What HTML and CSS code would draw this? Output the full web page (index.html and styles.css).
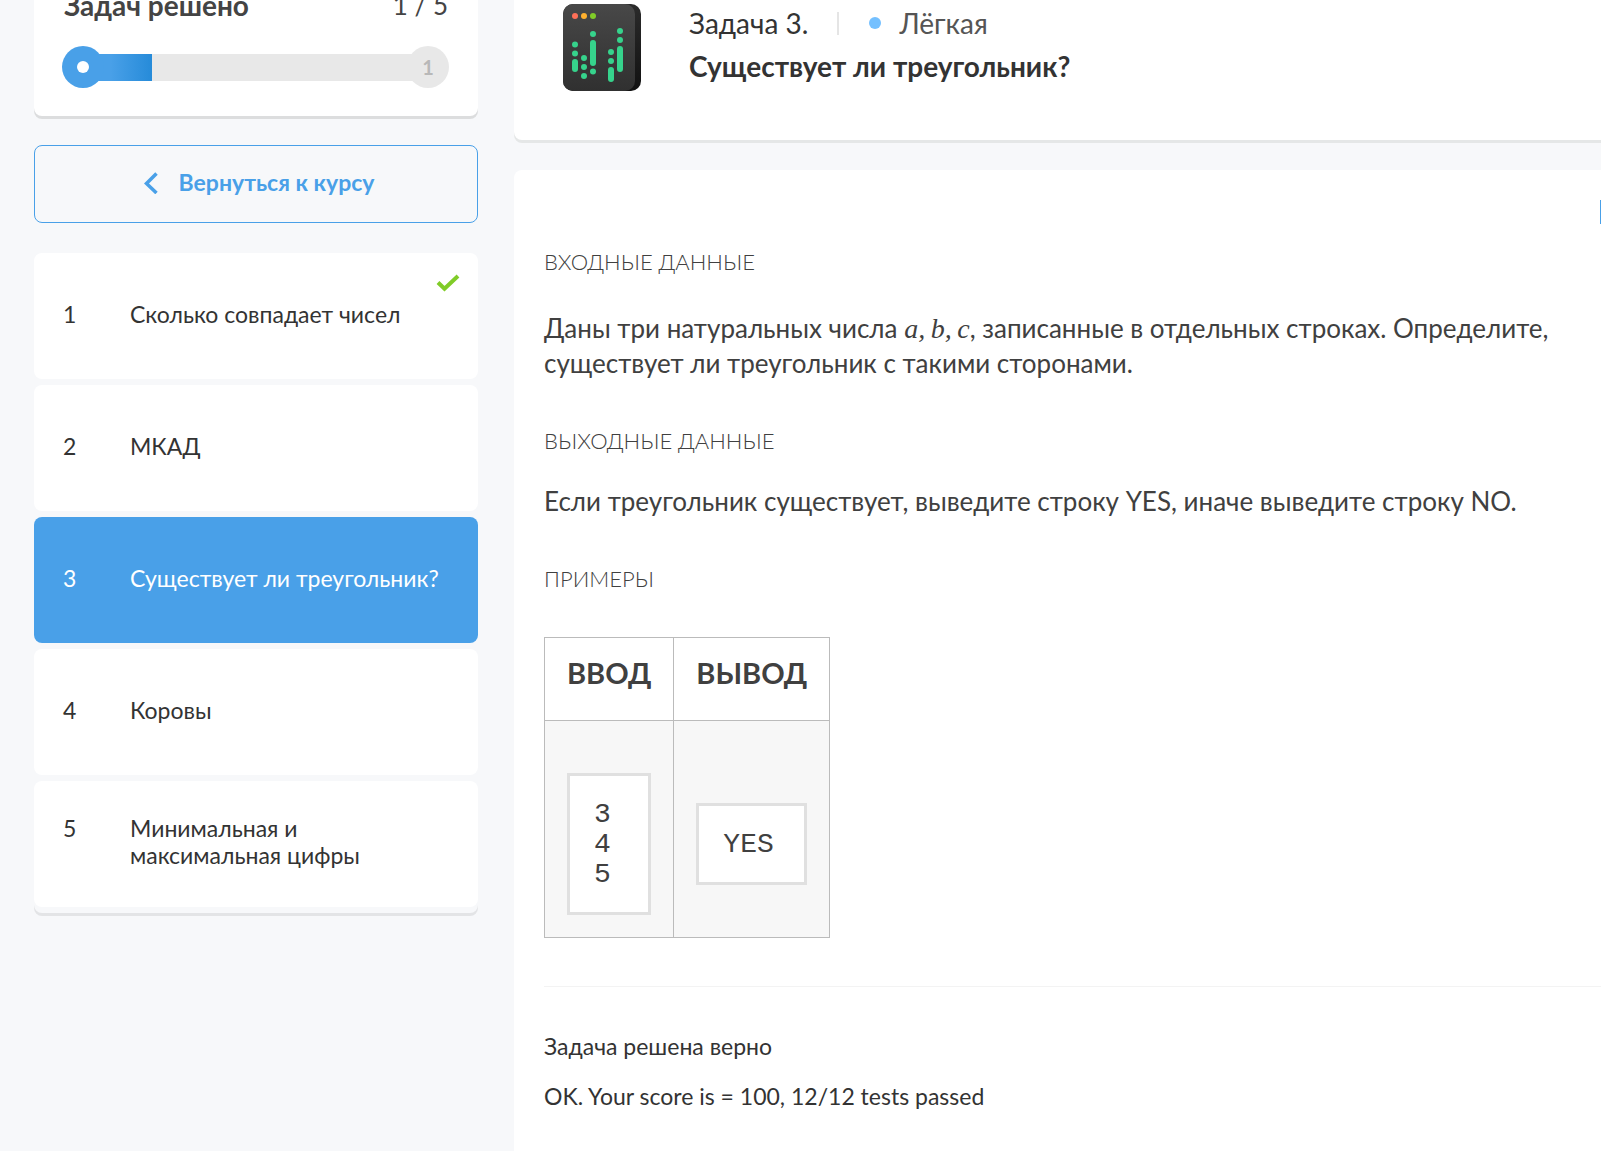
FILE: index.html
```html
<!DOCTYPE html>
<html lang="ru">
<head>
<meta charset="utf-8">
<meta name="viewport" content="width=device-width, initial-scale=1">
<title>Существует ли треугольник?</title>
<link rel="stylesheet" href="styles.css">
</head>
<body>
<div class="page">
  <aside class="sidebar">
    <section class="progress-card">
      <div class="progress-head">
        <h2 class="progress-title">Задач решено</h2>
        <span class="progress-count">1 / 5</span>
      </div>
      <div class="progress">
        <span class="progress-start"></span>
        <div class="progress-track"><div class="progress-fill" style="width:20%"></div></div>
        <span class="progress-end">1</span>
      </div>
    </section>
    <a class="back" href="#course">
      <svg width="14" height="24" viewBox="0 0 14 24" fill="none" stroke="currentColor" stroke-width="3.500"><path d="M12.500 3.500 2.500 13.500l10 9.500"/></svg>
      <span>Вернуться к курсу</span>
    </a>
    <ol class="tasks">
      <li><a class="task" href="#1"><span>1</span><span>Сколько совпадает чисел</span>
        <svg class="task-check" width="24" height="18" viewBox="0 0 24 18" fill="none" stroke="#80cc28" stroke-width="4"><path d="M2 8.500 8.500 14.800 22 2"/></svg></a></li>
      <li><a class="task" href="#2"><span>2</span><span>МКАД</span></a></li>
      <li><a class="task task-active" href="#3" aria-current="page"><span>3</span><span>Существует ли треугольник?</span></a></li>
      <li><a class="task" href="#4"><span>4</span><span>Коровы</span></a></li>
      <li><a class="task" href="#5"><span>5</span><span>Минимальная и максимальная цифры</span></a></li>
    </ol>
  </aside>

  <main class="main">
    <header class="task-header">
      <svg class="task-icon" width="78" height="87" viewBox="0 0 78 87">
        <defs>
          <linearGradient id="face" x1="0" y1="0" x2="0" y2="1"><stop offset="0" stop-color="#484848"/><stop offset="1" stop-color="#303030"/></linearGradient>
          <linearGradient id="side" x1="0" y1="0" x2="0" y2="1"><stop offset="0" stop-color="#2b2b2b"/><stop offset="1" stop-color="#111"/></linearGradient>
        </defs>
        <rect width="78" height="87" rx="10" fill="url(#side)"/>
        <rect width="72" height="87" rx="10" fill="url(#face)"/>
        <circle cx="12" cy="12" r="3" fill="#ff7058"/><circle cx="21" cy="12" r="3" fill="#ffb02e"/><circle cx="30" cy="12" r="3" fill="#80cc28"/>
        <g fill="#36d38c">
          <circle cx="12" cy="40.500" r="3"/><circle cx="12" cy="49.500" r="3"/><rect x="9" y="55" width="6" height="13" rx="3"/>
          <circle cx="21" cy="54" r="3"/><circle cx="21" cy="63" r="3"/><circle cx="21" cy="72" r="3"/>
          <circle cx="30" cy="30" r="3"/><rect x="27" y="36" width="6" height="26" rx="3"/><circle cx="30" cy="67.500" r="3"/>
          <circle cx="48" cy="48" r="3"/><circle cx="48" cy="57" r="3"/><rect x="45" y="63" width="6" height="15" rx="3"/>
          <circle cx="57" cy="27" r="3"/><circle cx="57" cy="36" r="3"/><rect x="54" y="42" width="6" height="26" rx="3"/>
        </g>
      </svg>
      <div class="task-heading">
        <div class="task-meta">
          <span>Задача 3.</span>
          <span class="divider"></span>
          <span class="dot"></span>
          <span class="task-level">Лёгкая</span>
        </div>
        <h1 class="task-title">Существует ли треугольник?</h1>
      </div>
    </header>

    <article class="task-body">
      <div class="toolbar"><button class="tool" type="button" aria-label="Развернуть"></button></div>
      <h3 class="section-title">Входные данные</h3>
      <p class="text text-lead">Даны три натуральных числа <span class="math">a,&thinsp;b,&thinsp;c</span>, записанные в отдельных строках. Определите, существует ли треугольник с такими сторонами.</p>
      <h3 class="section-title">Выходные данные</h3>
      <p class="text">Если треугольник существует, выведите строку YES, иначе выведите строку NO.</p>
      <h3 class="section-title">Примеры</h3>
      <table class="examples">
        <thead><tr><th>ВВОД</th><th>ВЫВОД</th></tr></thead>
        <tbody><tr><td><pre>3
4
5</pre></td><td><pre>YES</pre></td></tr></tbody>
      </table>
      <div class="result">
        <p>Задача решена верно</p>
        <p>OK. Your score is = 100, 12/12 tests passed</p>
      </div>
    </article>
  </main>
</div>
</body>
</html>
```
FILE: styles.css
```css
* { box-sizing: border-box; }
html { overflow: hidden; }
body {
  margin: 0;
  background: #f7f8fa;
  color: #333;
  font-family: Lato, "Open Sans", sans-serif;
  font-size: 23px;
  line-height: 27px;
}
h1, h2, h3, p, pre, ol { margin: 0; padding: 0; }
ol { list-style: none; }
a { color: inherit; text-decoration: none; }

/* The view opens slightly scrolled past the top of the cards. */
.page {
  display: flex;
  align-items: stretch;
  gap: 36px;
  margin-top: -36px;
  padding-left: 34px;
  min-height: calc(100vh + 36px);
}

.sidebar { flex: 0 0 444px; }
.progress-card {
  padding: 28px 29px;
  background: #fff;
  border-radius: 8px;
  box-shadow: 0 3px 0 #dcddde;
}
.progress-head {
  display: flex;
  justify-content: space-between;
  align-items: center;
  padding: 0 1px;
  color: #444;
  font-size: 26px;
}
.progress-title { font-size: 28px; font-weight: 700; }
.progress { display: flex; align-items: center; margin: 27px 0 0 -1px; }
.progress-start, .progress-end {
  display: flex;
  align-items: center;
  justify-content: center;
  flex: none;
  width: 42px;
  height: 42px;
  border-radius: 50%;
  background: #e8e8e8;
  color: #b8b8b8;
  font-size: 20px;
  font-weight: 700;
}
.progress-start { background: #49a0e8; z-index: 1; }
.progress-start::before { content: ""; width: 12px; height: 12px; border-radius: 50%; background: #fff; }
.progress-track { flex: 1; height: 27px; margin: 0 -21px; background: #e8e8e8; }
.progress-fill { height: 100%; background: linear-gradient(90deg, #49a0e8 40%, #268bd9); }

.back {
  display: flex;
  align-items: center;
  justify-content: center;
  gap: 21px;
  height: 78px;
  margin: 29px 0 30px;
  padding: 0 0 4px 6px;
  border: 1px solid #49a0e8;
  border-radius: 8px;
  color: #49a0e8;
  font-weight: 700;
}

.tasks { border-radius: 8px; box-shadow: 0 3px 0 #e3e4e6; }
.tasks li { padding-bottom: 6px; }
.task {
  position: relative;
  display: grid;
  grid-template-columns: 67px 1fr;
  align-content: center;
  align-items: baseline;
  min-height: 126px;
  padding: 0 29px 4px;
  border-radius: 8px;
  background: #fff;
}
.task-active { background: #49a0e8; color: #fff; }
.task-check { position: absolute; top: 21px; right: 18px; }

.main { flex: 1; min-width: 0; display: flex; flex-direction: column; gap: 30px; }
.task-header {
  display: flex;
  gap: 48px;
  padding: 40px 49px 49px;
  background: #fff;
  border-radius: 8px 0 0 8px;
  box-shadow: 0 3px 0 #e5e7e7;
}
.task-icon { flex: none; }
.task-meta { display: flex; align-items: center; font-size: 28px; line-height: 38px; }
.divider { width: 2px; height: 23px; margin: 0 30px 0 29px; background: #e5e5e5; }
.dot { width: 12px; height: 12px; margin-right: 18px; border-radius: 50%; background: #74c0ff; }
.task-level { color: #555; }
.task-title { font-size: 28px; line-height: 49px; font-weight: 700; }

.task-body {
  flex: 1;
  padding: 30px 0 32px 30px;
  background: #fff;
  border-radius: 8px 0 0 0;
  overflow: hidden;
  color: #404040;
}
.toolbar { display: flex; justify-content: flex-end; height: 24px; margin-right: -23px; }
.tool { width: 24px; height: 24px; padding: 0; border: 1px solid #49a0e8; background: none; }
.section-title {
  margin-top: 46px;
  font-size: 22px;
  line-height: 27px;
  font-weight: 300;
  text-transform: uppercase;
}
.toolbar + .section-title { margin-top: 24px; }
.text { margin-top: 30px; padding-right: 48px; font-size: 26px; line-height: 35px; }
.text-lead { margin-top: 36px; }
.math { font: italic 28px/1 "Liberation Serif", serif; }

.examples { margin-top: 45px; border-collapse: collapse; }
.examples th, .examples td { padding: 22px; border: 1px solid #bbb; }
.examples th { padding-top: 20px; padding-bottom: 32px; font-size: 29px; line-height: 30px; font-weight: 700; }
.examples td { padding-top: 52px; background: #f7f7f7; }
.examples pre {
  padding: 24px 24px 22px;
  border: 3px solid #e0e0e0;
  background: #fff;
  font-family: "Liberation Mono", monospace;
  font-size: 28px;
  line-height: 30px;
}
.result { margin-top: 48px; padding-top: 46px; border-top: 1px solid #f3f3f3; color: #333; }
.result p + p { margin-top: 23px; }
```
